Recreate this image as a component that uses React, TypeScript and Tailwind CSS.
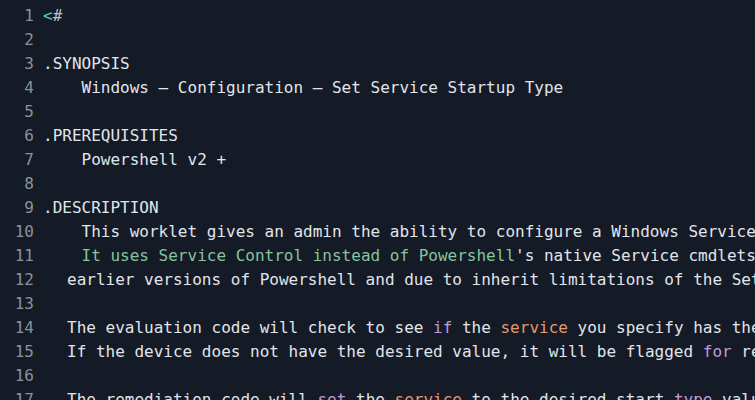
type Tok = { t: string; c?: string };

const TEAL = "text-[#4ec9c0]";
const GREEN = "text-[#86c59c]";
const PURPLE = "text-[#c39ad8]";
const ORANGE = "text-[#e6986a]";

// indent: 0 = none, 4 = four spaces, "tab" = the narrower 24px indent
type Line = { indent?: "sp" | "tab"; toks: Tok[] };

const lines: Line[] = [
  { toks: [{ t: "<", c: TEAL }, { t: "#", c: "text-[#b8c0cc]" }] },
  { toks: [] },
  { toks: [{ t: ".SYNOPSIS" }] },
  { indent: "sp", toks: [{ t: "Windows – Configuration – Set Service Startup Type" }] },
  { toks: [] },
  { toks: [{ t: ".PREREQUISITES" }] },
  { indent: "sp", toks: [{ t: "Powershell v2 +" }] },
  { toks: [] },
  { toks: [{ t: ".DESCRIPTION" }] },
  {
    indent: "sp",
    toks: [{ t: "This worklet gives an admin the ability to configure a Windows Service's startup type." }],
  },
  {
    indent: "sp",
    toks: [
      { t: "It uses Service Control instead of Powershell", c: GREEN },
      { t: "'s native Service cmdlets due to a lack of support in" },
    ],
  },
  {
    indent: "tab",
    toks: [{ t: "earlier versions of Powershell and due to inherit limitations of the Set-Service cmdlet." }],
  },
  { toks: [] },
  {
    indent: "tab",
    toks: [
      { t: "The evaluation code will check to see " },
      { t: "if", c: PURPLE },
      { t: " the " },
      { t: "service", c: ORANGE },
      { t: " you specify has the desired start type." },
    ],
  },
  {
    indent: "tab",
    toks: [
      { t: "If the device does not have the desired value, it will be flagged " },
      { t: "for", c: PURPLE },
      { t: " remediation." },
    ],
  },
  { toks: [] },
  {
    indent: "tab",
    toks: [
      { t: "The remediation code will " },
      { t: "set", c: PURPLE },
      { t: " the " },
      { t: "service", c: ORANGE },
      { t: " to the desired start " },
      { t: "type", c: PURPLE },
      { t: " value." },
    ],
  },
];

export default function App() {
  return (
    <div className="h-[400px] w-full overflow-hidden bg-[#141a26] pt-[4px] font-['DejaVu_Sans_Mono',monospace] text-[16px] leading-[24px]">
      {lines.map((line, i) => (
        <div key={i} className="flex h-[24px] whitespace-pre">
          <span className="w-[34px] shrink-0 text-right text-[#8b929c]">{i + 1}</span>
          <span className="shrink-0 pl-[9px] text-[#e1e5eb]">
            {line.indent === "sp" && "    "}
            {line.indent === "tab" && <span className="inline-block w-[24px]" />}
            {line.toks.map((tok, j) => (
              <span key={j} className={tok.c}>
                {tok.t}
              </span>
            ))}
          </span>
        </div>
      ))}
    </div>
  );
}
